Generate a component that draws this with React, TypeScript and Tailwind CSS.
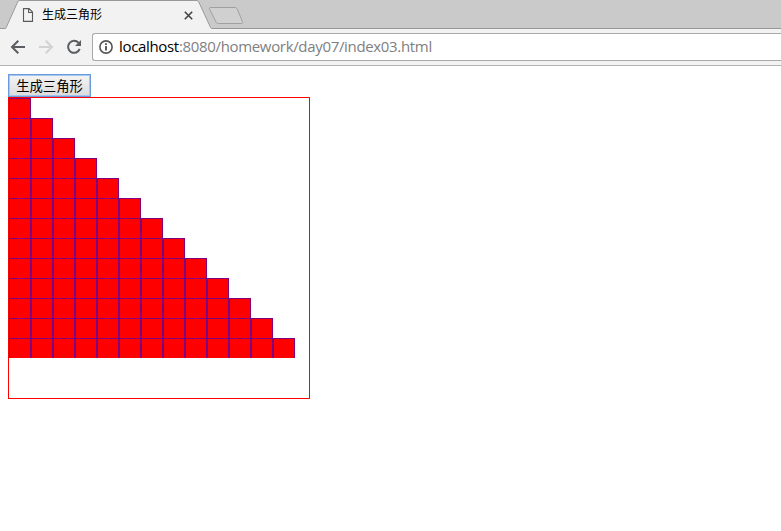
import React from "react";

const ROWS = 13;

function TabStrip() {
  return (
    <div className="relative flex h-[29px] bg-[#cacaca]">
      <svg className="absolute left-0 top-0" width="781" height="29" viewBox="0 0 781 29" fill="none">
        <path d="M0 28.5H4.5C5.6 28.5 6 28 6.5 27L17.4 2.5C18 1.2 18.6 .5 20 .5H196C197.6 .5 198.2 1 199 2.5L210 26.5C210.6 28 211 28.5 212.5 28.5H781V29H0Z" fill="none" stroke="#979797" />
        <path d="M5.5 29C6 28.6 6.6 28 7 27L17.9 2.7C18.5 1.5 19 1 20 1H196C197.3 1 197.8 1.4 198.5 2.7L209.5 26.5C210 27.8 210.5 28.6 212 29Z" fill="#f2f2f2" />
        <path d="M211 7.5H235C236 7.5 236.7 8 237.2 9L242.4 21.5C242.9 22.8 242.6 23.5 241.5 23.5H218.5C217.3 23.5 216.6 23.1 216 22L209.6 9.2C209.1 8.1 209.6 7.5 211 7.5Z" fill="#d0d0d0" stroke="#a0a0a0" />
      </svg>
      <div className="relative flex w-[200px] items-center pl-[22px]">
        <svg width="12" height="14" viewBox="0 0 12 14" fill="none" stroke="#5a5a5a" strokeWidth="1.1" className="mt-px">
          <path d="M1.5 .6H7L10.5 4.1V13.4H1.5ZM6.6 .6V4.5H10.5" />
        </svg>
        <span className="mb-0.5 ml-2 whitespace-nowrap font-['Noto_Sans_CJK_SC',sans-serif] text-xs leading-4 text-black">生成三角形</span>
        <svg className="ml-[82px] mt-px shrink-0" width="9" height="9" viewBox="0 0 9 9" stroke="#444" strokeWidth="1.6">
          <path d="M.8 .8L8.2 8.2M8.2 .8L.8 8.2" />
        </svg>
      </div>
    </div>
  );
}

function Toolbar() {
  return (
    <div className="flex h-[37px] items-start border-b border-[#b3b3b3] bg-[#f2f2f2] pl-2.5 pt-1">
      <div className="flex h-7 w-[82px] items-center">
        <svg width="16" height="16" viewBox="0 0 16 16" fill="none" stroke="#5a5d61" strokeWidth="2">
          <path d="M15 8H2.5M8.3 1.7L2 8L8.3 14.3" />
        </svg>
        <svg className="ml-3" width="16" height="16" viewBox="0 0 16 16" fill="none" stroke="#d2d2d2" strokeWidth="2">
          <path d="M1 8H13.5M7.7 1.7L14 8L7.7 14.3" />
        </svg>
        <svg className="ml-3" width="16" height="16" viewBox="0 0 16 16" fill="none">
          <path d="M12.6 3.9A6 6 0 1 0 13.7 9.9" stroke="#5a5d61" strokeWidth="2" />
          <path d="M15 1V7H9Z" fill="#5a5d61" />
        </svg>
      </div>
      <div className="flex h-7 flex-1 items-center rounded-l-[3px] border border-r-0 border-[#a9a9a9] bg-white pl-[6px]">
        <svg width="14" height="14" viewBox="0 0 14 14" fill="none" stroke="#555">
          <circle cx="7" cy="7" r="6.1" strokeWidth="1.6" />
          <path d="M7 6V10.6M7 3.3V5" strokeWidth="1.9" />
        </svg>
        <span className="mb-0.5 ml-1.5 whitespace-nowrap font-['Open_Sans','Noto_Sans',sans-serif] text-[15px] leading-5 tracking-[-0.33px] text-[#808080]">
          <span className="text-black">localhost</span>:8080/homework/day07/index03.html
        </span>
      </div>
    </div>
  );
}

function Triangle() {
  return (
    <div className="h-[302px] w-[302px] border border-[#ff0000]">
      {Array.from({ length: ROWS }, (_, row) => (
        <div key={row} className="flex h-5">
          {Array.from({ length: row + 1 }, (_, col) => (
            <div key={col} className="h-5 w-[22px] border-x border-t border-[#800080] bg-[#ff0000]" />
          ))}
        </div>
      ))}
    </div>
  );
}

export default function App() {
  return (
    <div className="h-[531px] w-[781px] overflow-hidden bg-white">
      <TabStrip />
      <Toolbar />
      <main className="p-2">
        <button className="flex h-[23px] w-[83px] items-center justify-center whitespace-nowrap border border-[#6b9ce0] bg-linear-to-b from-[#f4f4f4] to-[#dcdcdc] font-['Noto_Sans_CJK_SC',sans-serif] text-[13.333px] leading-5 text-black outline-1 -outline-offset-2 outline-[#a5c4ee]">
          生成三角形
        </button>
        <Triangle />
      </main>
    </div>
  );
}
